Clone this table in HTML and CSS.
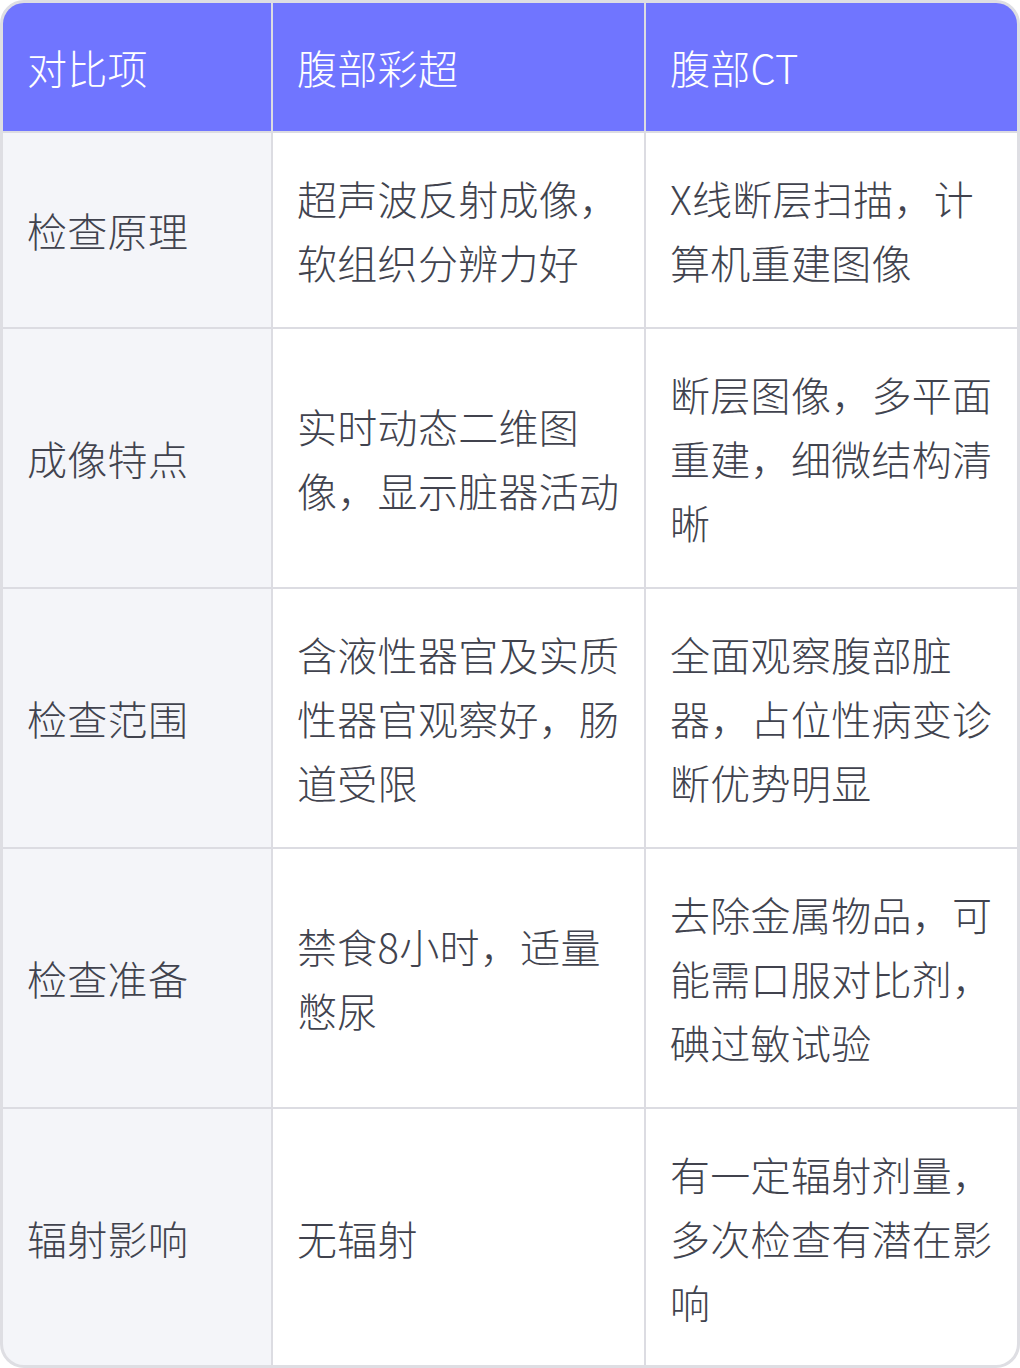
FILE: index.html
```html
<!DOCTYPE html>
<html lang="zh-CN">
<head>
<meta charset="utf-8">
<link rel="stylesheet" href="styles.css">
</head>
<body>
<div class="table">
  <div class="cell head">对比项</div>
  <div class="cell head">腹部彩超</div>
  <div class="cell head">腹部CT</div>

  <div class="cell label">检查原理</div>
  <div class="cell">超声波反射成像，软组织分辨力好</div>
  <div class="cell">X线断层扫描，计算机重建图像</div>

  <div class="cell label">成像特点</div>
  <div class="cell">实时动态二维图像，显示脏器活动</div>
  <div class="cell">断层图像，多平面重建，细微结构清晰</div>

  <div class="cell label">检查范围</div>
  <div class="cell">含液性器官及实质性器官观察好，肠道受限</div>
  <div class="cell">全面观察腹部脏器，占位性病变诊断优势明显</div>

  <div class="cell label">检查准备</div>
  <div class="cell">禁食8小时，适量憋尿</div>
  <div class="cell">去除金属物品，可能需口服对比剂，碘过敏试验</div>

  <div class="cell label">辐射影响</div>
  <div class="cell">无辐射</div>
  <div class="cell">有一定辐射剂量，多次检查有潜在影响</div>
</div>
</body>
</html>
```
FILE: styles.css
```css
html, body {
  margin: 0;
  padding: 0;
  background: #ffffff;
}
body {
  font-family: "Noto Sans CJK SC", "Noto Sans", sans-serif;
  font-weight: 300;
}
.table {
  width: 1020px;
  height: 1368px;
  box-sizing: border-box;
  display: grid;
  grid-template-columns: 268px 371px 371px;
  grid-template-rows: auto auto 1fr 1fr 1fr 1fr;
  gap: 2px;
  background: #dcdce2;
  border: 3px solid #dedee3;
  border-radius: 24px;
  overflow: hidden;
}
.cell {
  display: flex;
  align-items: center;
  padding: 33px 22px 33px 24px;
  font-size: 40px;
  line-height: 64px;
  letter-spacing: 0.3px;
  color: #41434e;
  background: #ffffff;
  word-break: break-all;
}
.head {
  padding-top: 32px;
  padding-bottom: 32px;
  background: #7075ff;
  color: #ffffff;
}
.label {
  background: #f4f5f9;
}
```
